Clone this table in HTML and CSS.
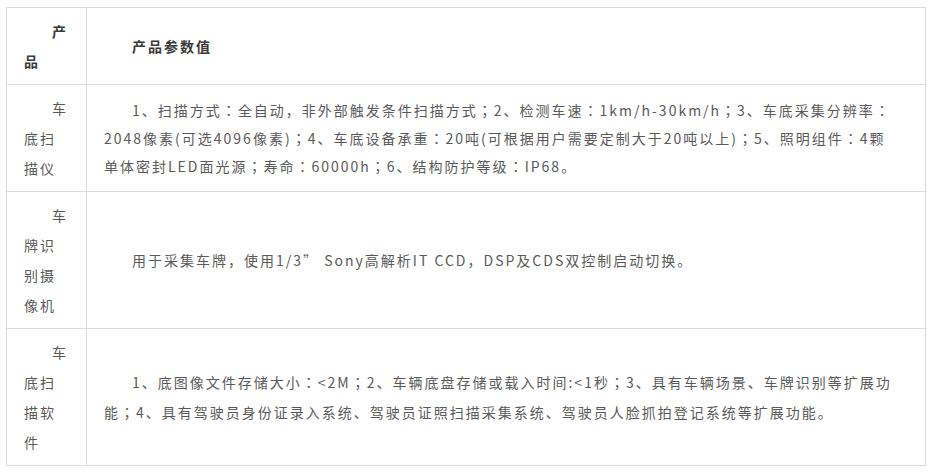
FILE: index.html
```html
<!DOCTYPE html>
<html lang="zh-CN">
<head>
<meta charset="utf-8">
<title>产品参数</title>
<link rel="stylesheet" href="styles.css">
</head>
<body>
<table class="spec">
  <colgroup>
    <col class="col-name">
    <col class="col-value">
  </colgroup>
  <tr class="head">
    <td class="name"><p>产品</p></td>
    <td class="value"><p>产品参数值</p></td>
  </tr>
  <tr>
    <td class="name"><p>车底扫描仪</p></td>
    <td class="value"><p>1、扫描方式<span class="pc" lang="ja">：</span>全自动，非外部触发条件扫描方式<span class="pc" lang="ja">；</span>2、检测车速<span class="pc" lang="ja">：</span>1km/h-30km/h<span class="pc" lang="ja">；</span>3、车底采集分辨率<span class="pc" lang="ja">：</span>2048像素(可选4096像素)<span class="pc" lang="ja">；</span>4、车底设备承重<span class="pc" lang="ja">：</span>20吨(可根据用户需要定制大于20吨以上)<span class="pc" lang="ja">；</span>5、照明组件<span class="pc" lang="ja">：</span>4颗<wbr>单体密封LED面光源<span class="pc" lang="ja">；</span>寿命<span class="pc" lang="ja">：</span>60000h<span class="pc" lang="ja">；</span>6、结构防护等级<span class="pc" lang="ja">：</span>IP68。</p></td>
  </tr>
  <tr>
    <td class="name"><p>车牌识别摄像机</p></td>
    <td class="value"><p>用于采集车牌，使用1/3<span class="pc">”</span> Sony高解析IT CCD，DSP及CDS双控制启动切换。</p></td>
  </tr>
  <tr>
    <td class="name"><p>车底扫描软件</p></td>
    <td class="value wide"><p>1、底图像文件存储大小<span class="pc" lang="ja">：</span>&lt;2M<span class="pc" lang="ja">；</span>2、车辆底盘存储或载入时间:&lt;1秒<span class="pc" lang="ja">；</span>3、具有车辆场景、车牌识别等扩展功<wbr>能<span class="pc" lang="ja">；</span>4、具有驾驶员身份证录入系统、驾驶员证照扫描采集系统、驾驶员人脸抓拍登记系统等扩展功能。</p></td>
  </tr>
</table>
</body>
</html>
```

FILE: styles.css
```css
html, body {
  background: #ffffff;
}
body {
  margin: 7px 6px;
  font-family: "Noto Sans CJK SC", "Noto Sans", sans-serif;
  font-size: 14px;
  color: #5a5a5a;
}
.spec {
  width: 920px;
  border-collapse: collapse;
  table-layout: fixed;
}
.col-name {
  width: 80px;
}
.spec td {
  border: 1px solid #dcdcdc;
  padding: 8px 17px;
  vertical-align: middle;
}
.spec td.value {
  padding-right: 27px;
}
.spec p {
  margin: 0;
  text-indent: 2em;
  letter-spacing: 2px;
}
.pc {
  font-family: "Noto Sans CJK JP", "Noto Sans CJK SC", sans-serif;
}
.name p {
  line-height: 30px;
}
.value p {
  line-height: 28px;
}
.wide p {
  line-height: 30px;
}
.head p {
  font-weight: bold;
  color: #3a3a3a;
}
```
